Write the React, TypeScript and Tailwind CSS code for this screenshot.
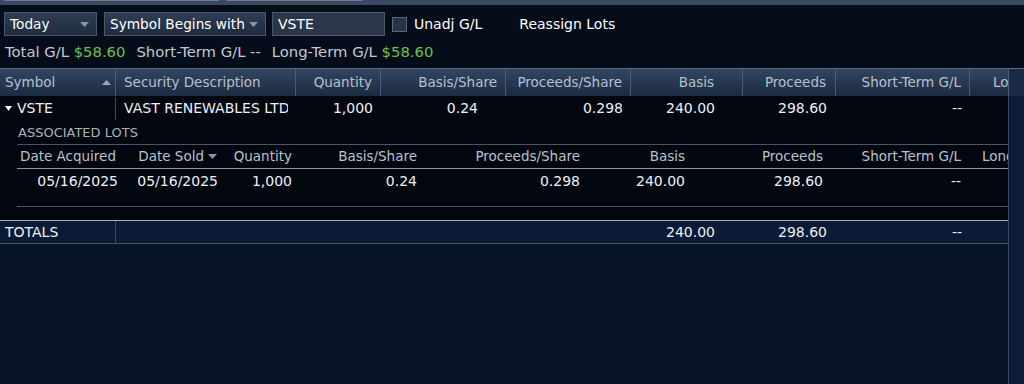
import React from "react";

const mainCols = "grid grid-cols-[116px_180px_85px_125px_125px_112px_93px_134px_38px]";
const subCols = "grid grid-cols-[105px_100px_74px_125px_163px_105px_138px_138px_43px]";

const Caret = ({ up = false, color = "#8a94a3" }: { up?: boolean; color?: string }) => (
    <svg width="9" height="5" viewBox="0 0 9 5" className="shrink-0">
        {up ? <polygon points="0,5 9,5 4.5,0" fill={color} /> : <polygon points="0,0 9,0 4.5,5" fill={color} />}
    </svg>
);

const Select = ({ label, w }: { label: string; w: string }) => (
    <div className={`${w} h-[24px] flex items-center justify-between pl-[5px] pr-[7px] border border-[#4c596c] bg-gradient-to-b from-[#2f3e55] to-[#1f2b3e] text-[13.7px] text-white whitespace-nowrap`}>
        <span>{label}</span>
        <Caret />
    </div>
);

const HeadCell = ({ children, right = true, pr = "pr-[8px]", last = false }: { children: React.ReactNode; right?: boolean; pr?: string; last?: boolean }) => (
    <div className={`h-full flex items-center overflow-hidden whitespace-nowrap ${right ? "justify-end" : "justify-start"} ${pr} ${last ? "" : "border-r border-[#4a5c78]"}`}>
        {children}
    </div>
);

const App = () => {
    return (
        <div className="w-[1024px] h-[384px] overflow-hidden bg-[#060d1a] flex flex-col font-['DejaVu_Sans',sans-serif] text-[13px]">
            {/* tab strip */}
            <div className="h-[5px] bg-[#3a4a63] flex gap-[7px] pl-[4px] shrink-0">
                <div className="w-[215px] h-[1px] bg-[#737c8c]" />
                <div className="w-[136px] h-[1px] bg-[#737c8c]" />
            </div>

            {/* filter controls */}
            <div className="mt-[7px] h-[24px] flex items-center pl-[4px] shrink-0">
                <Select label="Today" w="w-[93px]" />
                <div className="w-[7px]" />
                <Select label="Symbol Begins with" w="w-[162px]" />
                <div className="w-[6px]" />
                <div className="w-[113px] h-[24px] flex items-center pl-[5px] border border-[#4c596c] bg-[#2a374b] text-[14px] text-white">VSTE</div>
                <div className="w-[15px] h-[15px] ml-[7px] border border-[#5b6676] bg-[#26334a]" />
                <span className="ml-[7px] text-[14px] text-white">Unadj G/L</span>
                <span className="ml-[37px] text-[14px] text-white">Reassign Lots</span>
            </div>

            {/* summary */}
            <div className="mt-[6px] h-[20px] flex items-center pl-[5px] gap-[11px] text-[14.8px] text-[#c3cad4] shrink-0 whitespace-nowrap">
                <span>Total G/L <span className="text-[#6cc04a]">$58.60</span></span>
                <span>Short-Term G/L --</span>
                <span>Long-Term G/L <span className="text-[#6cc04a]">$58.60</span></span>
            </div>

            <div className="mt-[6px] h-[1px] bg-[#5d6879] shrink-0" />

            {/* header */}
            <div className="h-[27px] flex shrink-0 bg-gradient-to-b from-[#33465f] to-[#1c2b42] text-[#b4c0d0] text-[13.5px]">
                <div className={`${mainCols} w-[1008px] h-full overflow-hidden`}>
                    <HeadCell right={false} pr="pr-[0px]">
                        <div className="w-full flex items-center justify-between pl-[5px] pr-[4px]">
                            <span>Symbol</span>
                            <Caret up color="#9aa4b3" />
                        </div>
                    </HeadCell>
                    <HeadCell right={false} pr="pl-[8px]">Security Description</HeadCell>
                    <HeadCell>Quantity</HeadCell>
                    <HeadCell>Basis/Share</HeadCell>
                    <HeadCell>Proceeds/Share</HeadCell>
                    <HeadCell pr="pr-[28px]">Basis</HeadCell>
                    <HeadCell pr="pr-[9px]">Proceeds</HeadCell>
                    <HeadCell>Short-Term G/L</HeadCell>
                    <HeadCell right={false} pr="pl-[23px]" last>Long-Term G/L</HeadCell>
                </div>
                <div className="w-[16px] h-full border-l border-[#4a5c78] bg-[#1a2a44]" />
            </div>

            {/* body */}
            <div className="flex-1 flex min-h-0">
                <div className="w-[1008px] flex flex-col overflow-hidden">
                    <div className="h-[124px] bg-[#02060f] flex flex-col text-[#eef1f5] text-[14px] shrink-0">
                        {/* position row */}
                        <div className={`${mainCols} h-[25px]`}>
                            <div className="flex items-center gap-[5px] pl-[5px] border-r border-[#3b4657] my-[1px]">
                                <svg width="7" height="5" viewBox="0 0 7 5"><polygon points="0,0 7,0 3.5,5" fill="#ffffff" /></svg>
                                <span>VSTE</span>
                            </div>
                            <div className="flex items-center pl-[8px] pr-[8px] overflow-hidden">
                                <span className="overflow-hidden whitespace-nowrap">VAST RENEWABLES LTD</span>
                            </div>
                            <div className="flex items-center justify-end pr-[8px]">1,000</div>
                            <div className="flex items-center justify-end pr-[28px]">0.24</div>
                            <div className="flex items-center justify-end pr-[8px]">0.298</div>
                            <div className="flex items-center justify-end pr-[28px]">240.00</div>
                            <div className="flex items-center justify-end pr-[9px]">298.60</div>
                            <div className="flex items-center justify-end pr-[8px]">--</div>
                            <div />
                        </div>

                        {/* associated lots */}
                        <div className="pl-[17px] flex flex-col">
                            <div className="h-[23px] flex items-center pl-[1px] text-[13px] text-[#aab2be]">ASSOCIATED LOTS</div>
                            <div className={`${subCols} h-[25px] border-t border-b border-t-[#4a5466] border-b-[#8c94a0] text-[#b9c2ce] text-[13.5px]`}>
                                <div className="flex items-center pl-[3px] whitespace-nowrap">Date Acquired</div>
                                <div className="flex items-center justify-end gap-[4px] pr-[5px] whitespace-nowrap">
                                    <span>Date Sold</span>
                                    <Caret color="#8a94a3" />
                                </div>
                                <div className="flex items-center justify-end pr-[4px]">Quantity</div>
                                <div className="flex items-center justify-end pr-[4px]">Basis/Share</div>
                                <div className="flex items-center justify-end pr-[4px]">Proceeds/Share</div>
                                <div className="flex items-center justify-end pr-[4px]">Basis</div>
                                <div className="flex items-center justify-end pr-[4px]">Proceeds</div>
                                <div className="flex items-center justify-end pr-[4px] whitespace-nowrap">Short-Term G/L</div>
                                <div className="flex items-center pl-[17px] overflow-hidden whitespace-nowrap">Long-Term G/L</div>
                            </div>
                            <div className={`${subCols} h-[24px]`}>
                                <div className="flex items-center justify-end pr-[4px]">05/16/2025</div>
                                <div className="flex items-center justify-end pr-[4px]">05/16/2025</div>
                                <div className="flex items-center justify-end pr-[4px]">1,000</div>
                                <div className="flex items-center justify-end pr-[4px]">0.24</div>
                                <div className="flex items-center justify-end pr-[4px]">0.298</div>
                                <div className="flex items-center justify-end pr-[4px]">240.00</div>
                                <div className="flex items-center justify-end pr-[4px]">298.60</div>
                                <div className="flex items-center justify-end pr-[4px]">--</div>
                                <div />
                            </div>
                            <div className="mt-[13px] h-[1px] bg-[#4a5466]" />
                        </div>
                    </div>

                    {/* totals */}
                    <div className={`${mainCols} h-[24px] shrink-0 bg-[#0b1a35] border-t border-b border-t-[#a3acb9] border-b-[#4a5466] text-[#eef1f5] text-[14px]`}>
                        <div className="flex items-center pl-[5px] border-r border-[#3b4a62]">TOTALS</div>
                        <div />
                        <div />
                        <div />
                        <div />
                        <div className="flex items-center justify-end pr-[28px]">240.00</div>
                        <div className="flex items-center justify-end pr-[9px]">298.60</div>
                        <div className="flex items-center justify-end pr-[8px]">--</div>
                        <div />
                    </div>

                    <div className="flex-1 bg-[#081428]" />
                </div>
                <div className="w-[16px] border-l border-[#34445e] bg-[#0c1b36]" />
            </div>
        </div>
    );
};

export default App;
